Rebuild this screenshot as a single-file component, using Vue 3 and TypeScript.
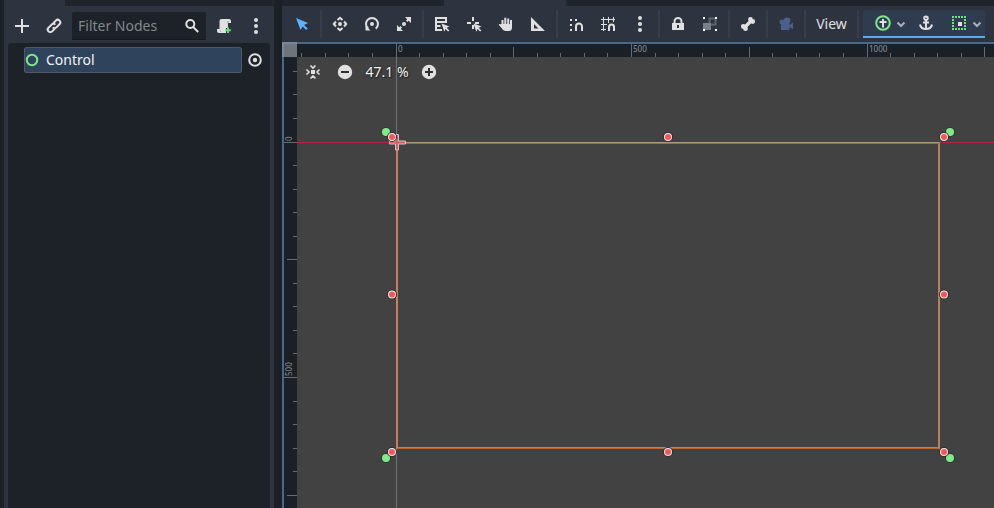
<script setup lang="ts">
import { computed, h, onBeforeUnmount, onMounted, ref, type FunctionalComponent } from 'vue'

type Shape = { d: string; fill?: string; stroke?: string; width?: number }

const LIGHT = '#e0e0e0'
const GREEN = '#7ee787'

const disc = (x: number, y: number, r: number): string =>
  `M${x - r} ${y}a${r} ${r} 0 1 0 ${2 * r} 0a${r} ${r} 0 1 0 ${-2 * r} 0z`
const f = (d: string, fill = LIGHT): Shape => ({ d, fill })
const s = (d: string, width = 2, stroke = LIGHT): Shape => ({ d, stroke, width })

const pointer = 'M7.5 7.5l8 3-2.8 1.3 2.6 2.6-1.2 1.2-2.6-2.6L10.3 15.8z'

const icons: Record<string, Shape[]> = {
  add: [s('M8 1v14M1 8h14')],
  link: [
    s('M7.2 5.2l2.6-2.6a2.6 2.6 0 0 1 3.7 3.7L10.4 9.4a2.6 2.6 0 0 1-3.7 0'),
    s('M8.8 10.8l-2.6 2.6a2.6 2.6 0 0 1-3.7-3.7L5.6 6.6a2.6 2.6 0 0 1 3.7 0'),
  ],
  search: [s(disc(6.3, 6, 4)), s('M9.2 9l5 5')],
  script: [
    f('M5.5 1H13a2 2 0 0 1 2 2v2h-3v5h-2v5H3a2 2 0 0 1-2-2v-2h2.5V3a2 2 0 0 1 2-2z'),
    s('M12 3v2.5M4.5 12.5v1', 1, '#8d9096'),
    s('M12 9.5v5.5M9.3 12.2h5.5', 2, '#5fe070'),
  ],
  menu: [f(disc(8, 2, 2) + disc(8, 8, 2) + disc(8, 14, 2))],
  control: [s(disc(8, 8, 5.2), 2, GREEN)],
  eye: [s(disc(8, 8, 5.8)), f(disc(8, 8, 2.2))],
  select: [f('M2 2l12 5-4 1.9 3.7 3.7-1.5 1.5-3.7-3.7L6.6 14z', '#5fb2ff')],
  move: [
    f(disc(8, 8, 2)),
    s('M5.5 4L8 1.8 10.5 4M5.5 12L8 14.2 10.5 12M4 5.5L1.8 8 4 10.5M12 5.5L14.2 8 12 10.5', 2),
  ],
  rotate: [f(disc(8, 8, 2)), s('M4.3 12.6A6 6 0 1 1 11.7 12.6'), f('M1.5 9.8v4.8h5z')],
  scale: [
    f(disc(8, 8, 2)),
    f('M9 1h6v6zM1 9v6h6z'),
    s('M13 3l-2.3 2.3M3 13l2.3-2.3'),
  ],
  list: [s('M2 1v14M1 2h12M1 6h11M12 1v6M1 10h5.5M1 14h7', 2), f(pointer)],
  pivot: [s('M7 1v4M1 7h4M9 7h4M7 9v4'), f(pointer)],
  hand: [
    s('M4.5 9V4M7.3 8V1.8M10.2 8V2.5M13 8V4', 2),
    f('M3.5 8H14v3.5q0 3.5-3.5 3.5H7.5q-2.5 0-4-3L.7 8.8q.6-1.4 2.1-.5z'),
  ],
  ruler: [f('M1 1v14h14zM4 8l4.5 4.5H4z')],
  snap: [
    s('M8 15v-4.5a3 3 0 0 1 6 0V15'),
    f('M2 3h2v2H2zM2 8h2v2H2zM2 13h2v2H2zM7 3h2v2H7z'),
  ],
  grid: [
    s('M3.5 1v14M8.5 1v6M13.5 1v5M1 3.5h14M1 8.5h6M1 13.5h5', 1),
    s('M9 15v-4a2.5 2.5 0 0 1 5 0v4'),
  ],
  lock: [s('M4.5 8V5.5a3.5 3.5 0 0 1 7 0V8'), f('M2 7h12v7H2zM7 9v3h2V9z')],
  group: [
    f('M1 7h8v7H1z', '#7c8087'),
    s('M7.5 7V2.5h6v6H9', 2, '#5f646e'),
    f('M1 1h2v2H1zM13 1h2v2h-2zM1 13h2v2H1zM13 13h2v2h-2z', '#ffffff'),
  ],
  bone: [
    s('M4.5 11.5l7-7', 3.4),
    f(disc(3.3, 10.5, 2.4) + disc(5.5, 12.7, 2.4) + disc(10.5, 3.4, 2.4) + disc(12.7, 5.5, 2.4)),
  ],
  camera: [
    f(disc(9, 4.7, 3.3) + disc(4, 6, 2.5), '#4b5f8d'),
    f('M3 7h8.5v2L15 6.8v6.4L11.5 11v3H3z', '#4b5f8d'),
  ],
  container: [s(disc(8, 8, 6.8), 2, GREEN), s('M8 4v8.5M4.5 7h7', 2)],
  anchor: [
    s(disc(8, 3.3, 1.8)),
    s('M8 5v9M5 7.5h6M2 9.5q.8 4.5 6 4.5t6-4.5'),
  ],
  region: [
    f(
      'M1 1h2v2H1zM4 1h2v2H4zM7 1h2v2H7zM10 1h2v2h-2zM13 1h2v2h-2zM1 13h2v2H1zM4 13h2v2H4zM7 13h2v2H7zM10 13h2v2h-2zM13 13h2v2h-2z' +
        'M1 4h2v2H1zM1 7h2v2H1zM1 10h2v2H1zM13 4h2v2h-2zM13 7h2v2h-2zM13 10h2v2h-2z',
      '#6fe37d',
    ),
    f('M7 7h4v4H7z'),
  ],
  chevron: [s('M4.5 7.5L8 11l3.5-3.5', 2, '#a9b0ba')],
  center: [
    f('M6 6h4v4H6z'),
    s('M5.5 1.5L8 4l2.5-2.5M5.5 14.5L8 12l2.5 2.5M1.5 5.5L4 8l-2.5 2.5M14.5 5.5L12 8l2.5 2.5', 1.6),
  ],
  minus: [f(disc(8, 8, 7.2)), s('M4 8h8', 2, '#303030')],
  plus: [f(disc(8, 8, 7.2)), s('M4 8h8M8 4v8', 2, '#303030')],
}

const Icon: FunctionalComponent<{ name: string }> = (props) =>
  h(
    'svg',
    { viewBox: '0 0 16 16', width: 16, height: 16, 'aria-hidden': 'true' },
    icons[props.name].map((p) =>
      h('path', {
        d: p.d,
        fill: p.fill ?? 'none',
        'fill-rule': props.name === 'lock' || props.name === 'ruler' ? 'evenodd' : 'nonzero',
        stroke: p.stroke,
        'stroke-width': p.width,
      }),
    ),
  )
Icon.props = ['name']

const tools: { name: string; label: string }[][] = [
  [{ name: 'select', label: 'Select Mode' }],
  [
    { name: 'move', label: 'Move Mode' },
    { name: 'rotate', label: 'Rotate Mode' },
    { name: 'scale', label: 'Scale Mode' },
  ],
  [
    { name: 'list', label: 'List Selectable Nodes' },
    { name: 'pivot', label: 'Change Pivot' },
    { name: 'hand', label: 'Pan Mode' },
    { name: 'ruler', label: 'Ruler Mode' },
  ],
  [
    { name: 'snap', label: 'Smart Snap' },
    { name: 'grid', label: 'Grid Snap' },
    { name: 'menu', label: 'Snapping Options' },
  ],
  [
    { name: 'lock', label: 'Lock Node' },
    { name: 'group', label: 'Group Nodes' },
  ],
  [{ name: 'bone', label: 'Skeleton Options' }],
  [{ name: 'camera', label: 'Override Camera' }],
]

const filter = ref('')

/* The rulers cover whatever size the viewport currently has. */
const viewport = ref<HTMLElement | null>(null)
const size = ref({ w: 0, h: 0 })
const measure = (): void => {
  if (viewport.value) {
    size.value = { w: viewport.value.clientWidth, h: viewport.value.clientHeight }
  }
}
onMounted(() => {
  measure()
  window.addEventListener('resize', measure)
})
onBeforeUnmount(() => window.removeEventListener('resize', measure))

/* Canvas space: origin and zoom, in pixels of the viewport area. */
const zoom = 0.471
const origin = { x: 115, y: 100 }
const ruler = 15
const frame = {
  x: origin.x,
  y: origin.y,
  w: Math.floor(1152 * zoom),
  h: Math.floor(648 * zoom),
}

type Tick = { at: number; size: number; label: string }
const makeTicks = (start: number, length: number): Tick[] => {
  const step = 50 * zoom
  const out: Tick[] = []
  for (let i = Math.ceil((ruler + 1 - start) / step); start + i * step < length; i++) {
    const major = i % 10 === 0
    out.push({
      at: Math.floor(start + i * step),
      size: major ? ruler : i % 5 === 0 ? 10 : 4,
      label: major ? String(i * 50) : '',
    })
  }
  return out
}
const ticksX = computed(() => makeTicks(origin.x, size.value.w))
const ticksY = computed(() => makeTicks(origin.y, size.value.h))

const cols = [frame.x - 5, frame.x + frame.w / 2, frame.x + frame.w + 5]
const rows = [frame.y - 5, frame.y + frame.h / 2, frame.y + frame.h + 5]
const handles = rows.flatMap((y, r) =>
  cols.map((x, c) => ({ x, y, r, c })).filter((p) => !(p.r === 1 && p.c === 1)),
)
const anchors = [cols[0] - 6, cols[2] + 6].flatMap((x) => [
  { x, y: rows[0] - 5 },
  { x, y: rows[2] + 6 },
])
</script>

<template>
  <div class="editor">
    <aside class="dock">
      <div class="strip"><span class="tab dock-tab"></span></div>
      <div class="dock-bar">
        <button class="tool" aria-label="Add Node"><Icon name="add" /></button>
        <button class="tool" aria-label="Instantiate Scene"><Icon name="link" /></button>
        <label class="filter">
          <input v-model="filter" type="text" placeholder="Filter Nodes" aria-label="Filter Nodes" />
          <Icon name="search" />
        </label>
        <button class="tool" aria-label="Attach Script"><Icon name="script" /></button>
        <button class="tool" aria-label="Scene Options"><Icon name="menu" /></button>
      </div>
      <div class="tree">
        <div class="node">
          <button class="node-name"><Icon name="control" />Control</button>
          <button class="eye" aria-label="Toggle Visibility"><Icon name="eye" /></button>
        </div>
      </div>
    </aside>

    <main class="main">
      <div class="strip"><span class="tab main-tab"></span></div>
      <div class="toolbar">
        <template v-for="(set, i) in tools" :key="i">
          <button v-for="t in set" :key="t.name" class="tool" :aria-label="t.label">
            <Icon :name="t.name" />
          </button>
          <span class="sep"></span>
        </template>
        <button class="view">View</button>
        <span class="sep"></span>
        <div class="context">
          <button class="drop" aria-label="Container Sizing"><Icon name="container" /><Icon name="chevron" /></button>
          <button class="anchor" aria-label="Anchor Mode"><Icon name="anchor" /></button>
          <button class="drop preset" aria-label="Anchor Preset"><Icon name="region" /><Icon name="chevron" /></button>
        </div>
      </div>

      <div ref="viewport" class="viewport">
        <svg class="canvas" width="100%" height="100%" aria-hidden="true">
          <rect width="100%" height="100%" fill="#424242" />
          <rect width="100%" :height="ruler" fill="#1b2026" />
          <rect :width="ruler" height="100%" fill="#1b2026" />
          <g fill="#666b70">
            <rect v-for="t in ticksX" :key="t.at" :x="t.at - 1" :y="ruler - t.size" width="1" :height="t.size" />
            <rect v-for="t in ticksY" :key="t.at" :x="ruler - t.size" :y="t.at" :width="t.size" height="1" />
          </g>
          <g class="scale-text">
            <template v-for="t in ticksX" :key="t.at">
              <text v-if="t.label" :x="t.at + 1" y="10">{{ t.label }}</text>
            </template>
            <template v-for="t in ticksY" :key="t.at">
              <text v-if="t.label" :transform="`translate(10 ${t.at - 1}) rotate(-90)`">{{ t.label }}</text>
            </template>
          </g>
          <rect :x="origin.x - 1" :y="ruler" width="1" height="100%" fill="#737373" />
          <rect :x="ruler" :y="origin.y" width="100%" height="1" fill="#b5263c" />

          <g>
            <rect :x="frame.x - 1" :y="frame.y" width="2" :height="frame.h + 2" fill="#ca7d59" />
            <rect :x="frame.x + frame.w - 1" :y="frame.y" width="2" :height="frame.h + 2" fill="#b8805f" />
            <rect :x="frame.x" :y="frame.y" :width="frame.w" height="1" fill="#a49b78" />
            <rect :x="frame.x" :y="frame.y + 1" :width="frame.w" height="1" fill="#b1643c" />
            <rect :x="frame.x" :y="frame.y + frame.h" :width="frame.w" height="1" fill="#9a8c82" />
            <rect :x="frame.x" :y="frame.y + frame.h + 1" :width="frame.w" height="1" fill="#b9622f" />
          </g>

          <path
            :transform="`translate(${origin.x} ${origin.y})`"
            d="M-1.5-7.5h3v6.500h7v3h-7v6h-3v-6h-6v-3h6z"
            fill="#e05c5c"
            stroke="#cfc4c4"
          />

          <g v-for="a in anchors" :key="`${a.x}-${a.y}`">
            <circle :cx="a.x" :cy="a.y" r="5" fill="#303830" />
            <circle :cx="a.x" :cy="a.y" r="4" fill="#80ea8b" />
          </g>
          <g v-for="p in handles" :key="`${p.x}-${p.y}`">
            <circle :cx="p.x" :cy="p.y" r="5" fill="#303030" />
            <circle :cx="p.x" :cy="p.y" r="4" fill="#ededed" />
            <circle :cx="p.x" :cy="p.y" r="3" fill="#ff5257" />
          </g>

          <rect width="100%" height="2" fill="#44698c" />
          <rect width="2" height="100%" fill="#44698c" />
          <rect :width="ruler" :height="ruler" fill="#8b9299" fill-opacity=".75" />
        </svg>
        <div class="zoom">
          <button class="tool" aria-label="Center View"><Icon name="center" /></button>
          <button class="tool" aria-label="Zoom Out"><Icon name="minus" /></button>
          <button class="percent">47.1 %</button>
          <button class="tool" aria-label="Zoom In"><Icon name="plus" /></button>
        </div>
      </div>
    </main>
  </div>
</template>

<style>
body {
  background: #1b2026;
}
</style>

<style scoped>
.editor {
  display: flex;
  gap: 8px;
  height: 100vh;
  padding-left: 4px;
  box-sizing: border-box;
  overflow: hidden;
  background: #1b2026;
  color: #e0e0e0;
  font: 14px/20px "Noto Sans", sans-serif;
}

button {
  display: flex;
  align-items: center;
  justify-content: center;
  margin: 0;
  padding: 0;
  border: 0;
  background: none;
  color: inherit;
  font: inherit;
}

svg {
  display: block;
  flex: none;
}

.dock {
  display: flex;
  flex-direction: column;
  flex: 0 0 270px;
  min-width: 0;
  background: #2e3340;
}

.main {
  display: flex;
  flex-direction: column;
  flex: 1;
  min-width: 0;
  background: #2e3340;
}

.strip {
  flex: 0 0 6px;
  display: flex;
  background: #20252d;
}

.tab {
  background: #2e3340;
}

.dock-tab {
  width: 61px;
}

.main-tab {
  width: 122px;
  margin-left: 162px;
}

.dock-bar {
  display: flex;
  align-items: center;
  gap: 4px;
  padding: 6px 4px 3px;
}

.tool {
  width: 28px;
  height: 28px;
  flex: none;
}

.filter {
  display: flex;
  align-items: center;
  flex: 1;
  min-width: 0;
  height: 28px;
  box-sizing: border-box;
  padding: 0 6px;
  border-bottom: 1px solid #15191e;
  border-radius: 2px 2px 0 0;
  background: #1d2229;
}

.filter input {
  flex: 1;
  width: 0;
  min-width: 0;
  padding: 0;
  border: 0;
  outline: 0;
  background: none;
  color: inherit;
  font: inherit;
}

.filter input::placeholder {
  color: #83878c;
  opacity: 1;
}

.tree {
  flex: 1;
  margin: 0 4px;
  padding: 4px 2px 0 16px;
  border-radius: 3px 3px 0 0;
  background: #1d2229;
}

.node {
  display: flex;
  align-items: center;
}

.node-name {
  flex: 1;
  justify-content: flex-start;
  gap: 6px;
  height: 26px;
  border-radius: 3px;
  box-shadow: inset 0 0 0 1px #4a5868;
  background: #2f445c;
  color: #f2f2f2;
}

.eye {
  width: 26px;
  height: 26px;
}

.toolbar {
  display: flex;
  align-items: center;
  gap: 4px;
  height: 36px;
  flex: none;
  padding-left: 6px;
}

.sep {
  flex: 0 0 2px;
  height: 28px;
  background: #383e49;
}

.view {
  width: 43px;
  height: 28px;
  flex: none;
}

.context {
  display: flex;
  align-items: center;
  height: 28px;
  width: 122px;
  flex: none;
  box-sizing: border-box;
  padding-left: 12px;
  border-bottom: 2px solid #58aaf5;
  border-radius: 2px 2px 0 0;
  background: #2f3c50;
}

.drop {
  gap: 2px;
}

.anchor {
  width: 34px;
}

.preset {
  margin-left: auto;
}

.viewport {
  position: relative;
  flex: 1;
  min-height: 0;
}

.canvas {
  position: absolute;
  inset: 0;
}

.scale-text {
  fill: #8e9296;
  font-size: 8px;
}

.zoom {
  position: absolute;
  top: 16px;
  left: 17px;
  display: flex;
  align-items: center;
  gap: 4px;
}

.percent {
  width: 48px;
  height: 28px;
  color: #f2f2f2;
  text-shadow: 0 0 2px #202020, 1px 1px 1px #202020;
}
</style>
